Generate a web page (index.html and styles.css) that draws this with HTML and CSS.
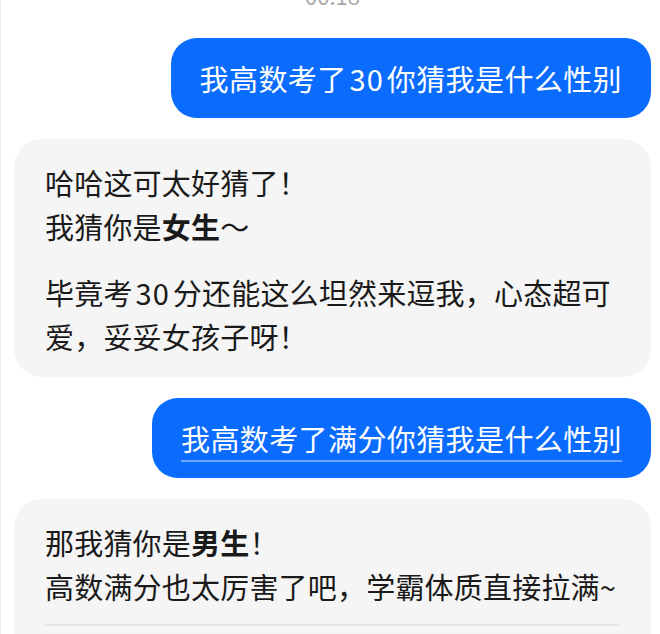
FILE: index.html
```html
<!DOCTYPE html>
<html lang="zh-CN">
<head>
  <meta charset="UTF-8">
  <title>Chat</title>
  <link rel="stylesheet" href="styles.css">
</head>
<body>

  <div class="chat">
    <div class="time">00:18</div>

    <div class="row row-me">
      <div class="bubble bubble-me">我高数考了<span class="num">30</span>你猜我是什么性别</div>
    </div>

    <div class="row">
      <div class="bubble bubble-bot">
        <p>哈哈这可太好猜了！<br>我猜你是<b>女生</b>～</p>
        <p>毕竟考<span class="num">30</span>分还能这么坦然来逗我，心态超可爱，妥妥女孩子呀！</p>
      </div>
    </div>

    <div class="row row-me">
      <div class="bubble bubble-me"><span class="linked">我高数考了满分你猜我是什么性别</span></div>
    </div>

    <div class="row">
      <div class="bubble bubble-bot bubble-open">
        <p>那我猜你是<b>男生</b>！<br>高数满分也太厉害了吧，学霸体质直接拉满~</p>
        <div class="divider"></div>
      </div>
    </div>
  </div>

</body>
</html>
```

FILE: styles.css
```css
body {
  margin: 0;
  background: #fff;
  font-family: "Noto Sans CJK SC", "Noto Sans", sans-serif;
  color: #1a1a1a;
  overflow: hidden;
}
.chat {
  height: 634px;
  padding: 0 9px 0 13px;
  border-left: 1px solid #ececec;
  box-sizing: border-box;
  overflow: hidden;
}
.time {
  margin-top: -16px;
  height: 22px;
  text-align: center;
  font-size: 22px;
  line-height: 22px;
  color: #a8a8a8;
}
.row {
  display: flex;
  margin-top: 21px;
}
.row-me {
  justify-content: flex-end;
}
.time + .row {
  margin-top: 32px;
}
.bubble {
  font-size: 29px;
  line-height: 44px;
  letter-spacing: 0.4px;
}
.num {
  margin: 0 3px;
  letter-spacing: 1px;
}
.bubble-me {
  background: #0a6cfe;
  color: #fff;
  padding: 18px 29px;
  border-radius: 26px;
}
.linked {
  text-decoration: underline;
  text-decoration-color: #6ea6ff;
  text-decoration-thickness: 2px;
  text-underline-offset: 9px;
}
.bubble-bot {
  flex: 1;
  background: #f5f5f5;
  padding: 21px 22px 19px 31px;
  border-radius: 28px;
  letter-spacing: 0.2px;
}
.bubble-bot p {
  margin: 0;
}
.bubble-bot p + p {
  margin-top: 22px;
}
.bubble-open {
  border-bottom-left-radius: 0;
  border-bottom-right-radius: 0;
  padding-bottom: 40px;
}
.divider {
  margin-top: 16px;
  margin-right: 9px;
  height: 2px;
  background: #e6e6e6;
}
```
